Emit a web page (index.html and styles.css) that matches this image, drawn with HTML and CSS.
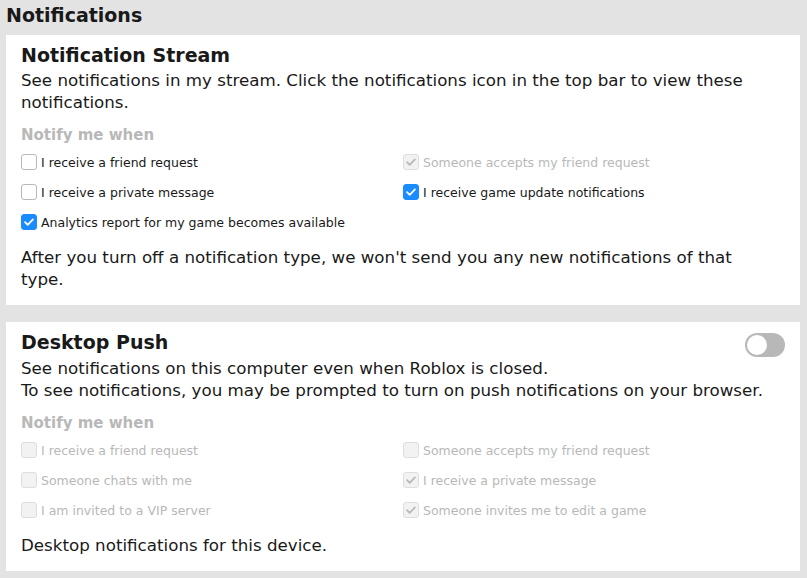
FILE: index.html
```html
<!DOCTYPE html>
<html>
<head>
<meta charset="utf-8">
<link rel="stylesheet" href="styles.css">
</head>
<body>
<div class="page">
  <h1 class="page-title">Notifications</h1>

  <section class="card">
    <h2 class="card-title">Notification Stream</h2>
    <p class="desc">See notifications in my stream. Click the notifications icon in the top bar to view these notifications.</p>
    <h3 class="notify-label">Notify me when</h3>
    <div class="options">
      <label class="opt"><span class="box"></span><span class="txt">I receive a friend request</span></label>
      <label class="opt disabled"><span class="box checked-gray"><svg viewBox="0 0 16 16"><path d="M3.5 8.2l3 3 6-6.2"/></svg></span><span class="txt">Someone accepts my friend request</span></label>
      <label class="opt"><span class="box"></span><span class="txt">I receive a private message</span></label>
      <label class="opt"><span class="box checked"><svg viewBox="0 0 16 16"><path d="M3.5 8.2l3 3 6-6.2"/></svg></span><span class="txt">I receive game update notifications</span></label>
      <label class="opt"><span class="box checked"><svg viewBox="0 0 16 16"><path d="M3.5 8.2l3 3 6-6.2"/></svg></span><span class="txt">Analytics report for my game becomes available</span></label>
    </div>
    <p class="desc footer narrow">After you turn off a notification type, we won't send you any new notifications of that type.</p>
  </section>

  <section class="card">
    <div class="card-head">
      <h2 class="card-title">Desktop Push</h2>
      <span class="toggle"><span class="knob"></span></span>
    </div>
    <p class="desc">See notifications on this computer even when Roblox is closed.<br>To see notifications, you may be prompted to turn on push notifications on your browser.</p>
    <h3 class="notify-label">Notify me when</h3>
    <div class="options">
      <label class="opt disabled"><span class="box"></span><span class="txt">I receive a friend request</span></label>
      <label class="opt disabled"><span class="box"></span><span class="txt">Someone accepts my friend request</span></label>
      <label class="opt disabled"><span class="box"></span><span class="txt">Someone chats with me</span></label>
      <label class="opt disabled"><span class="box checked-gray"><svg viewBox="0 0 16 16"><path d="M3.5 8.2l3 3 6-6.2"/></svg></span><span class="txt">I receive a private message</span></label>
      <label class="opt disabled"><span class="box"></span><span class="txt">I am invited to a VIP server</span></label>
      <label class="opt disabled"><span class="box checked-gray"><svg viewBox="0 0 16 16"><path d="M3.5 8.2l3 3 6-6.2"/></svg></span><span class="txt">Someone invites me to edit a game</span></label>
    </div>
    <p class="desc footer">Desktop notifications for this device.</p>
  </section>
</div>
</body>
</html>
```

FILE: styles.css
```css
html, body {
  margin: 0;
  padding: 0;
  background: #e3e3e3;
}
body {
  font-family: "DejaVu Sans", "Open Sans", sans-serif;
  color: #191919;
}
.page {
  width: 794px;
  padding: 2px 0 0 6px;
}
.page-title {
  margin: 0;
  font-size: 19px;
  font-weight: 700;
  line-height: 26px;
  height: 33px;
}
.card {
  background: #ffffff;
  padding: 6px 15px 15px;
  margin-bottom: 17px;
}
.card-head {
  display: flex;
  justify-content: space-between;
  align-items: flex-start;
}
.card-title {
  margin: 0;
  font-size: 19px;
  font-weight: 700;
  line-height: 28px;
}
.desc {
  margin: 0;
  font-size: 16.7px;
  line-height: 22px;
}
.notify-label {
  margin: 11px 0 0;
  font-size: 15px;
  font-weight: 700;
  color: #b8b8b8;
  line-height: 22px;
}
.options {
  display: grid;
  grid-template-columns: 382px 382px;
  grid-auto-rows: 30px;
  margin-top: 1px;
  margin-bottom: 4px;
}
.opt {
  display: flex;
  align-items: center;
  font-size: 12.5px;
  color: #191919;
}
.opt.disabled {
  color: #b8b8b8;
}
.box {
  width: 14px;
  height: 14px;
  border: 1px solid #b8b8b8;
  border-radius: 3px;
  background: #fff;
  margin-right: 4px;
  display: flex;
  align-items: center;
  justify-content: center;
  flex: none;
}
.opt.disabled .box {
  background: #f2f2f2;
  border-color: #dedede;
}
.box svg {
  width: 14px;
  height: 14px;
  fill: none;
  stroke-width: 2;
  stroke-linecap: round;
  stroke-linejoin: round;
}
.box.checked {
  background: #1a8cff;
  border-color: #1a8cff;
}
.box.checked svg {
  stroke: #ffffff;
}
.opt .box.checked-gray {
  background: #f2f2f2;
  border-color: #dedede;
}
.box.checked-gray svg {
  stroke: #b8b8b8;
}
.footer {
  margin-top: 9px;
}
.narrow {
  max-width: 740px;
}
.toggle {
  width: 40px;
  height: 24px;
  border-radius: 12px;
  background: #b8b8b8;
  margin-top: 5px;
  display: flex;
  align-items: center;
  padding-left: 2px;
  box-sizing: border-box;
}
.knob {
  width: 20px;
  height: 20px;
  border-radius: 50%;
  background: #fff;
}
```
